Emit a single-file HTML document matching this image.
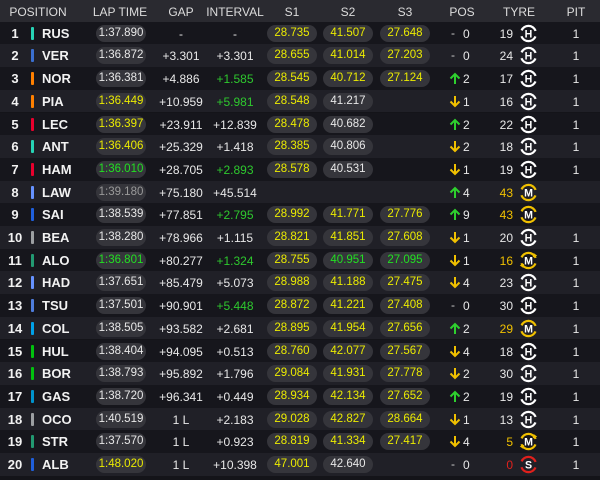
<!DOCTYPE html>
<html><head><meta charset="utf-8"><style>
*{margin:0;padding:0;box-sizing:border-box}
body{width:600px;height:480px;background:#141419;font-family:"Liberation Sans",sans-serif;color:#e8e8e8;overflow:hidden;position:relative}
.h{position:absolute;left:0;top:0;width:600px;height:22px;background:#2a2a30;font-size:12px;color:#dcdcdc}
.h span{position:absolute;top:5px;transform:translateX(-50%);white-space:nowrap}
.r{position:absolute;left:0;width:600px;height:22.7px;font-size:12px}
.o{background:#16161c}.e{background:#202027}
.r>*{position:absolute}
.n{left:0;width:30px;text-align:center;top:4px;font-weight:bold;font-size:13px;color:#f2f2f2}
.b{left:31px;top:5px;width:3px;height:13px;border-radius:1px}
.c{left:42px;top:4px;font-weight:bold;font-size:13px;color:#f2f2f2}
.p{top:3px;width:50px;height:17px;border-radius:9px;background:#35353b;text-align:center;line-height:17px;font-size:11.5px}
.l{left:96px}.s1{left:267px}.s2{left:323px}.s3{left:380px}
.g{left:151px;width:60px;text-align:center;top:5px}
.i{left:205px;width:60px;text-align:center;top:5px}
.pa{left:448px;top:5px;width:14px;height:13px}
.pn{left:463px;top:5px}
.dash{left:451px;top:4px;color:#ccc}
.tn{left:490px;width:23px;text-align:right;top:5px}
.ti{left:519px;top:2px;width:19px;height:19px}
.pit{left:566px;width:20px;text-align:center;top:5px}
.y{color:#ebeb00}.w{color:#e8e8e8}.gr{color:#2ec82e}.gl{color:#22e022}.dg{color:#9a9a9a}.my{color:#f0c000}.rd{color:#e0201c}
</style></head><body>
<svg width="0" height="0" style="position:absolute"><defs>
<g id="up"><path d="M7 12V2M2.5 6.5L7 2l4.5 4.5" stroke="#2ed02e" stroke-width="2" fill="none"/></g>
<g id="dn"><path d="M7 1v10M2.5 6.5L7 11l4.5-4.5" stroke="#f0c000" stroke-width="2" fill="none"/></g>
</defs></svg>
<div class="h"><span style="left:38px">POSITION</span><span style="left:120px">LAP TIME</span><span style="left:181px">GAP</span><span style="left:235px">INTERVAL</span><span style="left:292px">S1</span><span style="left:348px">S2</span><span style="left:405px">S3</span><span style="left:462px">POS</span><span style="left:519px">TYRE</span><span style="left:576px">PIT</span></div>

<div class="r o" style="top:21.7px"><div class="n">1</div><div class="b" style="background:#27d3b5"></div><div class="c">RUS</div><div class="p l w">1:37.890</div><div class="g">-</div><div class="i">-</div><div class="p s1 y">28.735</div><div class="p s2 y">41.507</div><div class="p s3 y">27.648</div><div class="dash">-</div><div class="pn">0</div><div class="tn">19</div><svg class="ti" viewBox="0 0 17 17"><circle cx="8.5" cy="8.5" r="6.8" fill="none" stroke="#fff" stroke-width="2" stroke-dasharray="16 5.4" stroke-dashoffset="18.7"/><text x="8.5" y="12" font-size="9.5" font-weight="bold" fill="#fff" text-anchor="middle" font-family="Liberation Sans">H</text></svg><div class="pit">1</div></div>

<div class="r e" style="top:44.4px"><div class="n">2</div><div class="b" style="background:#3a6fd0"></div><div class="c">VER</div><div class="p l w">1:36.872</div><div class="g">+3.301</div><div class="i">+3.301</div><div class="p s1 y">28.655</div><div class="p s2 y">41.014</div><div class="p s3 y">27.203</div><div class="dash">-</div><div class="pn">0</div><div class="tn">24</div><svg class="ti" viewBox="0 0 17 17"><circle cx="8.5" cy="8.5" r="6.8" fill="none" stroke="#fff" stroke-width="2" stroke-dasharray="16 5.4" stroke-dashoffset="18.7"/><text x="8.5" y="12" font-size="9.5" font-weight="bold" fill="#fff" text-anchor="middle" font-family="Liberation Sans">H</text></svg><div class="pit">1</div></div>

<div class="r o" style="top:67.1px"><div class="n">3</div><div class="b" style="background:#ff8000"></div><div class="c">NOR</div><div class="p l w">1:36.381</div><div class="g">+4.886</div><div class="i gr">+1.585</div><div class="p s1 y">28.545</div><div class="p s2 y">40.712</div><div class="p s3 y">27.124</div><svg class="pa"><use href="#up"/></svg><div class="pn">2</div><div class="tn">17</div><svg class="ti" viewBox="0 0 17 17"><circle cx="8.5" cy="8.5" r="6.8" fill="none" stroke="#fff" stroke-width="2" stroke-dasharray="16 5.4" stroke-dashoffset="18.7"/><text x="8.5" y="12" font-size="9.5" font-weight="bold" fill="#fff" text-anchor="middle" font-family="Liberation Sans">H</text></svg><div class="pit">1</div></div>

<div class="r e" style="top:89.8px"><div class="n">4</div><div class="b" style="background:#ff8000"></div><div class="c">PIA</div><div class="p l y">1:36.449</div><div class="g">+10.959</div><div class="i gr">+5.981</div><div class="p s1 y">28.548</div><div class="p s2 w">41.217</div><svg class="pa"><use href="#dn"/></svg><div class="pn">1</div><div class="tn">16</div><svg class="ti" viewBox="0 0 17 17"><circle cx="8.5" cy="8.5" r="6.8" fill="none" stroke="#fff" stroke-width="2" stroke-dasharray="16 5.4" stroke-dashoffset="18.7"/><text x="8.5" y="12" font-size="9.5" font-weight="bold" fill="#fff" text-anchor="middle" font-family="Liberation Sans">H</text></svg><div class="pit">1</div></div>

<div class="r o" style="top:112.5px"><div class="n">5</div><div class="b" style="background:#e8002d"></div><div class="c">LEC</div><div class="p l y">1:36.397</div><div class="g">+23.911</div><div class="i">+12.839</div><div class="p s1 y">28.478</div><div class="p s2 w">40.682</div><svg class="pa"><use href="#up"/></svg><div class="pn">2</div><div class="tn">22</div><svg class="ti" viewBox="0 0 17 17"><circle cx="8.5" cy="8.5" r="6.8" fill="none" stroke="#fff" stroke-width="2" stroke-dasharray="16 5.4" stroke-dashoffset="18.7"/><text x="8.5" y="12" font-size="9.5" font-weight="bold" fill="#fff" text-anchor="middle" font-family="Liberation Sans">H</text></svg><div class="pit">1</div></div>

<div class="r e" style="top:135.2px"><div class="n">6</div><div class="b" style="background:#27d3b5"></div><div class="c">ANT</div><div class="p l y">1:36.406</div><div class="g">+25.329</div><div class="i">+1.418</div><div class="p s1 y">28.385</div><div class="p s2 w">40.806</div><svg class="pa"><use href="#dn"/></svg><div class="pn">2</div><div class="tn">18</div><svg class="ti" viewBox="0 0 17 17"><circle cx="8.5" cy="8.5" r="6.8" fill="none" stroke="#fff" stroke-width="2" stroke-dasharray="16 5.4" stroke-dashoffset="18.7"/><text x="8.5" y="12" font-size="9.5" font-weight="bold" fill="#fff" text-anchor="middle" font-family="Liberation Sans">H</text></svg><div class="pit">1</div></div>

<div class="r o" style="top:157.9px"><div class="n">7</div><div class="b" style="background:#e8002d"></div><div class="c">HAM</div><div class="p l gl">1:36.010</div><div class="g">+28.705</div><div class="i gr">+2.893</div><div class="p s1 y">28.578</div><div class="p s2 w">40.531</div><svg class="pa"><use href="#dn"/></svg><div class="pn">1</div><div class="tn">19</div><svg class="ti" viewBox="0 0 17 17"><circle cx="8.5" cy="8.5" r="6.8" fill="none" stroke="#fff" stroke-width="2" stroke-dasharray="16 5.4" stroke-dashoffset="18.7"/><text x="8.5" y="12" font-size="9.5" font-weight="bold" fill="#fff" text-anchor="middle" font-family="Liberation Sans">H</text></svg><div class="pit">1</div></div>

<div class="r e" style="top:180.6px"><div class="n">8</div><div class="b" style="background:#6692ff"></div><div class="c">LAW</div><div class="p l dg">1:39.180</div><div class="g">+75.180</div><div class="i">+45.514</div><svg class="pa"><use href="#up"/></svg><div class="pn">4</div><div class="tn my">43</div><svg class="ti" viewBox="0 0 17 17"><circle cx="8.5" cy="8.5" r="6.8" fill="none" stroke="#f0c000" stroke-width="2" stroke-dasharray="16 5.4" stroke-dashoffset="18.7"/><text x="8.5" y="12" font-size="9.5" font-weight="bold" fill="#fff" text-anchor="middle" font-family="Liberation Sans">M</text></svg></div>

<div class="r o" style="top:203.3px"><div class="n">9</div><div class="b" style="background:#1f5fdc"></div><div class="c">SAI</div><div class="p l w">1:38.539</div><div class="g">+77.851</div><div class="i gr">+2.795</div><div class="p s1 y">28.992</div><div class="p s2 y">41.771</div><div class="p s3 y">27.776</div><svg class="pa"><use href="#up"/></svg><div class="pn">9</div><div class="tn my">43</div><svg class="ti" viewBox="0 0 17 17"><circle cx="8.5" cy="8.5" r="6.8" fill="none" stroke="#f0c000" stroke-width="2" stroke-dasharray="16 5.4" stroke-dashoffset="18.7"/><text x="8.5" y="12" font-size="9.5" font-weight="bold" fill="#fff" text-anchor="middle" font-family="Liberation Sans">M</text></svg></div>

<div class="r e" style="top:226px"><div class="n">10</div><div class="b" style="background:#9c9fa2"></div><div class="c">BEA</div><div class="p l w">1:38.280</div><div class="g">+78.966</div><div class="i">+1.115</div><div class="p s1 y">28.821</div><div class="p s2 y">41.851</div><div class="p s3 y">27.608</div><svg class="pa"><use href="#dn"/></svg><div class="pn">1</div><div class="tn">20</div><svg class="ti" viewBox="0 0 17 17"><circle cx="8.5" cy="8.5" r="6.8" fill="none" stroke="#fff" stroke-width="2" stroke-dasharray="16 5.4" stroke-dashoffset="18.7"/><text x="8.5" y="12" font-size="9.5" font-weight="bold" fill="#fff" text-anchor="middle" font-family="Liberation Sans">H</text></svg><div class="pit">1</div></div>

<div class="r o" style="top:248.7px"><div class="n">11</div><div class="b" style="background:#229971"></div><div class="c">ALO</div><div class="p l gl">1:36.801</div><div class="g">+80.277</div><div class="i gr">+1.324</div><div class="p s1 y">28.755</div><div class="p s2 gl">40.951</div><div class="p s3 gl">27.095</div><svg class="pa"><use href="#dn"/></svg><div class="pn">1</div><div class="tn my">16</div><svg class="ti" viewBox="0 0 17 17"><circle cx="8.5" cy="8.5" r="6.8" fill="none" stroke="#f0c000" stroke-width="2" stroke-dasharray="16 5.4" stroke-dashoffset="18.7"/><path d="M13 2.5l2 1.5-2.5 1M4 14.5l-2-1.5 2.5-1" stroke="#f0c000" stroke-width="1.3" fill="none"/><text x="8.5" y="12" font-size="9.5" font-weight="bold" fill="#fff" text-anchor="middle" font-family="Liberation Sans">M</text></svg><div class="pit">1</div></div>

<div class="r e" style="top:271.4px"><div class="n">12</div><div class="b" style="background:#6692ff"></div><div class="c">HAD</div><div class="p l w">1:37.651</div><div class="g">+85.479</div><div class="i">+5.073</div><div class="p s1 y">28.988</div><div class="p s2 y">41.188</div><div class="p s3 y">27.475</div><svg class="pa"><use href="#dn"/></svg><div class="pn">4</div><div class="tn">23</div><svg class="ti" viewBox="0 0 17 17"><circle cx="8.5" cy="8.5" r="6.8" fill="none" stroke="#fff" stroke-width="2" stroke-dasharray="16 5.4" stroke-dashoffset="18.7"/><text x="8.5" y="12" font-size="9.5" font-weight="bold" fill="#fff" text-anchor="middle" font-family="Liberation Sans">H</text></svg><div class="pit">1</div></div>

<div class="r o" style="top:294.1px"><div class="n">13</div><div class="b" style="background:#4e7cdb"></div><div class="c">TSU</div><div class="p l w">1:37.501</div><div class="g">+90.901</div><div class="i gr">+5.448</div><div class="p s1 y">28.872</div><div class="p s2 y">41.221</div><div class="p s3 y">27.408</div><div class="dash">-</div><div class="pn">0</div><div class="tn">30</div><svg class="ti" viewBox="0 0 17 17"><circle cx="8.5" cy="8.5" r="6.8" fill="none" stroke="#fff" stroke-width="2" stroke-dasharray="16 5.4" stroke-dashoffset="18.7"/><text x="8.5" y="12" font-size="9.5" font-weight="bold" fill="#fff" text-anchor="middle" font-family="Liberation Sans">H</text></svg><div class="pit">1</div></div>

<div class="r e" style="top:316.8px"><div class="n">14</div><div class="b" style="background:#00a1e8"></div><div class="c">COL</div><div class="p l w">1:38.505</div><div class="g">+93.582</div><div class="i">+2.681</div><div class="p s1 y">28.895</div><div class="p s2 y">41.954</div><div class="p s3 y">27.656</div><svg class="pa"><use href="#up"/></svg><div class="pn">2</div><div class="tn my">29</div><svg class="ti" viewBox="0 0 17 17"><circle cx="8.5" cy="8.5" r="6.8" fill="none" stroke="#f0c000" stroke-width="2" stroke-dasharray="16 5.4" stroke-dashoffset="18.7"/><text x="8.5" y="12" font-size="9.5" font-weight="bold" fill="#fff" text-anchor="middle" font-family="Liberation Sans">M</text></svg><div class="pit">1</div></div>

<div class="r o" style="top:339.5px"><div class="n">15</div><div class="b" style="background:#01c00e"></div><div class="c">HUL</div><div class="p l w">1:38.404</div><div class="g">+94.095</div><div class="i">+0.513</div><div class="p s1 y">28.760</div><div class="p s2 y">42.077</div><div class="p s3 y">27.567</div><svg class="pa"><use href="#dn"/></svg><div class="pn">4</div><div class="tn">18</div><svg class="ti" viewBox="0 0 17 17"><circle cx="8.5" cy="8.5" r="6.8" fill="none" stroke="#fff" stroke-width="2" stroke-dasharray="16 5.4" stroke-dashoffset="18.7"/><text x="8.5" y="12" font-size="9.5" font-weight="bold" fill="#fff" text-anchor="middle" font-family="Liberation Sans">H</text></svg><div class="pit">1</div></div>

<div class="r e" style="top:362.2px"><div class="n">16</div><div class="b" style="background:#01c00e"></div><div class="c">BOR</div><div class="p l w">1:38.793</div><div class="g">+95.892</div><div class="i">+1.796</div><div class="p s1 y">29.084</div><div class="p s2 y">41.931</div><div class="p s3 y">27.778</div><svg class="pa"><use href="#dn"/></svg><div class="pn">2</div><div class="tn">30</div><svg class="ti" viewBox="0 0 17 17"><circle cx="8.5" cy="8.5" r="6.8" fill="none" stroke="#fff" stroke-width="2" stroke-dasharray="16 5.4" stroke-dashoffset="18.7"/><text x="8.5" y="12" font-size="9.5" font-weight="bold" fill="#fff" text-anchor="middle" font-family="Liberation Sans">H</text></svg><div class="pit">1</div></div>

<div class="r o" style="top:384.9px"><div class="n">17</div><div class="b" style="background:#0093cc"></div><div class="c">GAS</div><div class="p l w">1:38.720</div><div class="g">+96.341</div><div class="i">+0.449</div><div class="p s1 y">28.934</div><div class="p s2 y">42.134</div><div class="p s3 y">27.652</div><svg class="pa"><use href="#up"/></svg><div class="pn">2</div><div class="tn">19</div><svg class="ti" viewBox="0 0 17 17"><circle cx="8.5" cy="8.5" r="6.8" fill="none" stroke="#fff" stroke-width="2" stroke-dasharray="16 5.4" stroke-dashoffset="18.7"/><text x="8.5" y="12" font-size="9.5" font-weight="bold" fill="#fff" text-anchor="middle" font-family="Liberation Sans">H</text></svg><div class="pit">1</div></div>

<div class="r e" style="top:407.6px"><div class="n">18</div><div class="b" style="background:#9c9fa2"></div><div class="c">OCO</div><div class="p l w">1:40.519</div><div class="g">1 L</div><div class="i">+2.183</div><div class="p s1 y">29.028</div><div class="p s2 y">42.827</div><div class="p s3 y">28.664</div><svg class="pa"><use href="#dn"/></svg><div class="pn">1</div><div class="tn">13</div><svg class="ti" viewBox="0 0 17 17"><circle cx="8.5" cy="8.5" r="6.8" fill="none" stroke="#fff" stroke-width="2" stroke-dasharray="16 5.4" stroke-dashoffset="18.7"/><text x="8.5" y="12" font-size="9.5" font-weight="bold" fill="#fff" text-anchor="middle" font-family="Liberation Sans">H</text></svg><div class="pit">1</div></div>

<div class="r o" style="top:430.3px"><div class="n">19</div><div class="b" style="background:#229971"></div><div class="c">STR</div><div class="p l w">1:37.570</div><div class="g">1 L</div><div class="i">+0.923</div><div class="p s1 y">28.819</div><div class="p s2 y">41.334</div><div class="p s3 y">27.417</div><svg class="pa"><use href="#dn"/></svg><div class="pn">4</div><div class="tn my">5</div><svg class="ti" viewBox="0 0 17 17"><circle cx="8.5" cy="8.5" r="6.8" fill="none" stroke="#f0c000" stroke-width="2" stroke-dasharray="16 5.4" stroke-dashoffset="18.7"/><path d="M13 2.5l2 1.5-2.5 1M4 14.5l-2-1.5 2.5-1" stroke="#f0c000" stroke-width="1.3" fill="none"/><text x="8.5" y="12" font-size="9.5" font-weight="bold" fill="#fff" text-anchor="middle" font-family="Liberation Sans">M</text></svg><div class="pit">1</div></div>

<div class="r e" style="top:453px"><div class="n">20</div><div class="b" style="background:#1f5fdc"></div><div class="c">ALB</div><div class="p l y">1:48.020</div><div class="g">1 L</div><div class="i">+10.398</div><div class="p s1 y">47.001</div><div class="p s2 w">42.640</div><div class="dash">-</div><div class="pn">0</div><div class="tn rd">0</div><svg class="ti" viewBox="0 0 17 17"><circle cx="8.5" cy="8.5" r="6.8" fill="none" stroke="#e0201c" stroke-width="2" stroke-dasharray="16 5.4" stroke-dashoffset="18.7"/><text x="8.5" y="12" font-size="9.5" font-weight="bold" fill="#fff" text-anchor="middle" font-family="Liberation Sans">S</text></svg><div class="pit">1</div></div>
</body></html>
